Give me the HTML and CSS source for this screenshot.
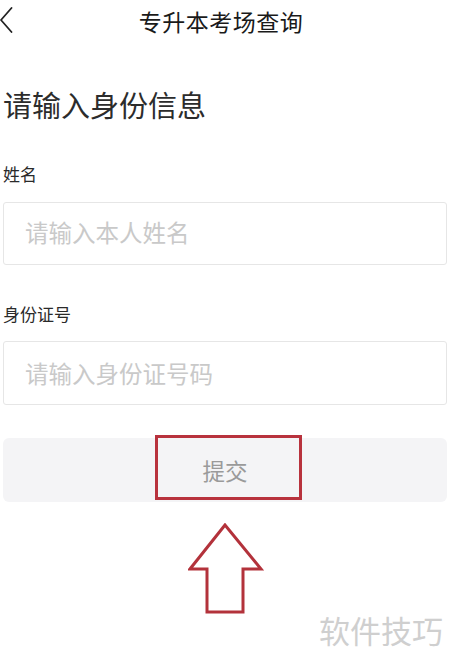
FILE: index.html
```html
<!DOCTYPE html>
<html lang="zh-CN">
<head>
<meta charset="utf-8">
<title>专升本考场查询</title>
<link rel="stylesheet" href="styles.css">
</head>
<body>
<div class="page">
  <header class="topbar">
    <svg class="back" width="14" height="28" viewBox="0 0 14 28"><path d="M11.5 2 L1 14 L11.5 26" fill="none" stroke="#222" stroke-width="1.8" stroke-linecap="round" stroke-linejoin="round"/></svg>
    <h1 class="title">专升本考场查询</h1>
  </header>
  <main class="form">
    <h2 class="heading">请输入身份信息</h2>
    <label class="label label-name">姓名</label>
    <input class="field field-name" type="text" placeholder="请输入本人姓名">
    <label class="label label-id">身份证号</label>
    <input class="field field-id" type="text" placeholder="请输入身份证号码">
    <button class="submit" type="button">提交</button>
  </main>
  <div class="mark-box"></div>
  <svg class="mark-arrow" width="80" height="94" viewBox="0 0 80 94"><path d="M37 2 L2 46 L19 46 L19 89 L55 89 L55 46 L73 46 Z" fill="none" stroke="#b3323b" stroke-width="3" stroke-linejoin="miter"/></svg>
  <div class="watermark">软件技巧</div>
</div>
</body>
</html>
```
FILE: styles.css
```css
* { box-sizing: border-box; }
html, body { margin: 0; padding: 0; background: #fff; }
body {
  font-family: "Noto Sans CJK SC", "Noto Sans", sans-serif;
  width: 450px;
  height: 665px;
  overflow: hidden;
}
.page { position: relative; width: 450px; height: 665px; }
.topbar {
  height: 42px;
  display: flex;
  align-items: center;
  justify-content: center;
  position: relative;
}
.back { position: absolute; left: 0; top: 6px; }
.title {
  margin: 0 0 0 -8px;
  font-size: 23px;
  font-weight: 400;
  line-height: 42px;
  color: #1a1a1a;
  letter-spacing: 0.5px;
}
.form {
  padding: 0 3px;
  display: flex;
  flex-direction: column;
}
.heading {
  margin: 42px 0 0 0;
  font-size: 29px;
  font-weight: 400;
  line-height: 40px;
  color: #2c2c2c;
}
.label {
  font-size: 17px;
  line-height: 24px;
  color: #2a2a2a;
}
.label-name { margin-top: 38px; }
.label-id { margin-top: 37px; }
.field {
  display: block;
  width: 100%;
  height: 63px;
  margin: 16px 0 0 0;
  padding: 0 0 0 21px;
  border: 1px solid #e6e6e6;
  border-radius: 3px;
  background: #fff;
  font-family: "Noto Sans CJK SC", "Noto Sans", sans-serif;
  font-size: 23.5px;
  color: #333;
  outline: none;
}
.field-name { padding-bottom: 4px; }
.field-id { margin-top: 15px; height: 64px; padding-bottom: 1px; }
.field::placeholder { color: #c9c9c9; }
.submit {
  display: block;
  width: 100%;
  height: 64px;
  margin-top: 33px;
  border: none;
  border-radius: 6px;
  background: #f4f4f6;
  font-family: "Noto Sans CJK SC", "Noto Sans", sans-serif;
  font-size: 22.5px;
  color: #9a9a9a;
  padding: 0;
}
.mark-box {
  position: absolute;
  left: 155px;
  top: 435px;
  width: 147px;
  height: 65px;
  border: 3px solid #b8323d;
}
.mark-arrow { position: absolute; left: 188px; top: 523px; }
.watermark {
  position: absolute;
  left: 319px;
  top: 608px;
  font-size: 31px;
  line-height: 44px;
  color: #cfcfcf;
}
```
